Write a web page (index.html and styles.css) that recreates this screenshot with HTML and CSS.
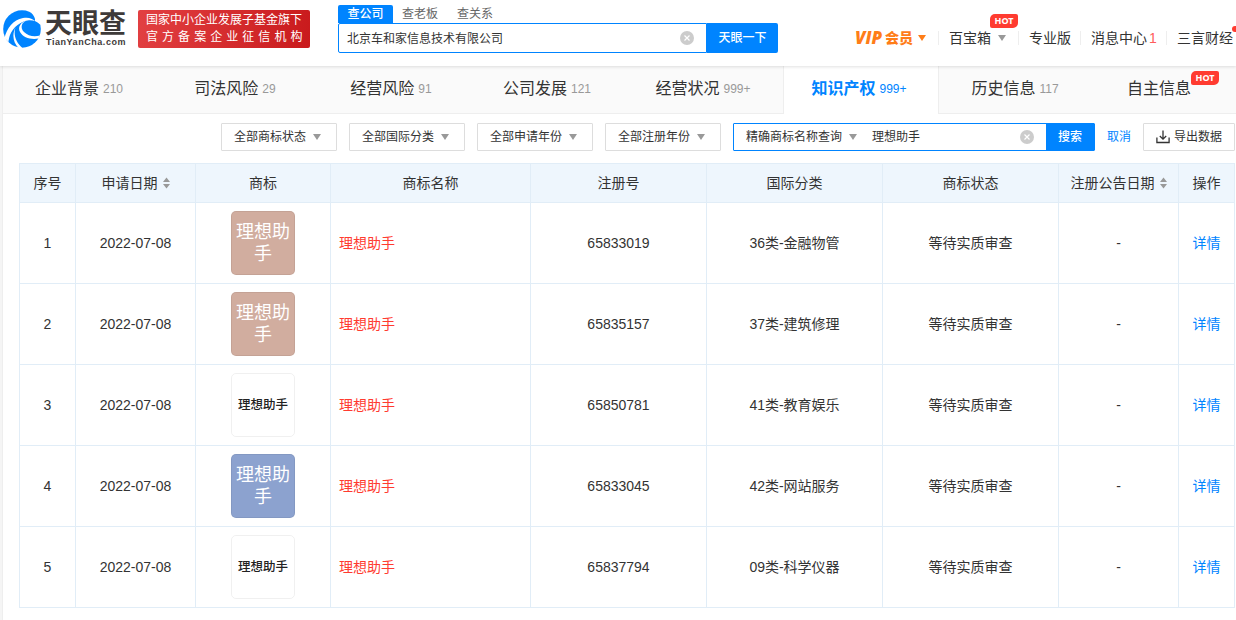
FILE: index.html
```html
<!DOCTYPE html>
<html lang="zh-CN">
<head>
<meta charset="utf-8">
<title>天眼查</title>
<link rel="stylesheet" href="styles.css">
</head>
<body>
<header class="header">
  <div class="logo">
    <svg class="logo-mark" width="38" height="38" viewBox="0 0 38 38">
      <circle cx="19" cy="19" r="18.8" fill="#0084ff"/>
      <path d="M1.500 28C4 18 10 10 20 8C26 7 29 8.500 32 11C32.500 8.500 31 5.500 28 2.500L32 3L38 11L37.500 15C34 11 30 10 26 10.200C18 11 10 17 7 25C6 28 5.500 30 5.500 32Z" fill="#fff"/>
      <path d="M12.500 17C10 25 13 33 20 38.500H16C10.500 33 8.500 26 12.500 17Z" fill="#fff"/>
      <path d="M25 10C18 12 17 18 21 22C25 26 31 27 37 25.500L35.500 28.500C28 30 20 27.500 17 22C14.500 17 17.500 12 25 10Z" fill="#fff"/>
    </svg>
    <div class="logo-words">
      <div class="logo-cn">天眼查</div>
      <div class="logo-en">TianYanCha.com</div>
    </div>
  </div>
  <div class="slogan"><div class="slogan-top">国家中小企业发展子基金旗下</div><div class="slogan-bottom">官方备案企业征信机构</div></div>
  <div class="search">
    <div class="search-tabs"><span class="search-tab search-tab-on">查公司</span><span class="search-tab">查老板</span><span class="search-tab">查关系</span></div>
    <div class="search-box">
      <div class="search-input"><span>北京车和家信息技术有限公司</span>
        <svg width="14" height="14" viewBox="0 0 14 14"><circle cx="7" cy="7" r="7" fill="#ccc"/><path d="M4.500 4.500l5 5M9.500 4.500l-5 5" stroke="#fff" stroke-width="1.200"/></svg>
      </div>
      <div class="search-btn">天眼一下</div>
    </div>
  </div>
  <nav class="nav">
    <div class="nav-item vip"><i>VIP</i><b>会员</b><span class="caret caret-orange"></span></div>
    <div class="nav-item box">百宝箱<span class="caret"></span><span class="hot hot-nav">HOT</span></div>
    <div class="nav-item pro">专业版</div>
    <div class="nav-item msg">消息中心<span class="count">1</span></div>
    <div class="nav-item user">三言财经<span class="dot"></span></div>
  </nav>
</header>
<main class="panel">
  <div class="tabs">
    <div class="tab">企业背景<span>210</span></div>
    <div class="tab">司法风险<span>29</span></div>
    <div class="tab">经营风险<span>91</span></div>
    <div class="tab">公司发展<span>121</span></div>
    <div class="tab">经营状况<span>999+</span></div>
    <div class="tab tab-on">知识产权<span>999+</span></div>
    <div class="tab">历史信息<span>117</span></div>
    <div class="tab tab-last">自主信息<em class="hot hot-tab">HOT</em></div>
  </div>
  <div class="filters">
    <div class="select">全部商标状态<span class="caret"></span></div>
    <div class="select">全部国际分类<span class="caret"></span></div>
    <div class="select">全部申请年份<span class="caret"></span></div>
    <div class="select">全部注册年份<span class="caret"></span></div>
    <div class="query">
      <div class="query-type">精确商标名称查询<span class="caret"></span></div>
      <div class="query-text">理想助手</div>
      <svg width="14" height="14" viewBox="0 0 14 14"><circle cx="7" cy="7" r="7" fill="#ccc"/><path d="M4.500 4.500l5 5M9.500 4.500l-5 5" stroke="#fff" stroke-width="1.200"/></svg>
      <div class="query-btn">搜索</div>
    </div>
    <div class="cancel">取消</div>
    <div class="export">
      <svg width="14" height="14" viewBox="0 0 14 14" fill="none" stroke="#333" stroke-width="1.300"><path d="M7 .5v8.500M3.800 6L7 9.200L10.200 6M.9 7.500v5h12.200v-5"/></svg>导出数据
    </div>
  </div>
  <div class="table">
    <div class="row head">
      <div>序号</div>
      <div>申请日期<svg class="sort" width="7" height="12" viewBox="0 0 7 12"><path d="M0 5L3.500 .5L7 5ZM0 7H7L3.500 11.500Z" fill="#999"/></svg></div>
      <div>商标</div><div>商标名称</div><div>注册号</div><div>国际分类</div><div>商标状态</div>
      <div>注册公告日期<svg class="sort" width="7" height="12" viewBox="0 0 7 12"><path d="M0 5L3.500 .5L7 5ZM0 7H7L3.500 11.500Z" fill="#999"/></svg></div>
      <div>操作</div>
    </div>
    <div class="row"><div>1</div><div>2022-07-08</div><div><span class="mark brown">理想助手</span></div><div class="name">理想助手</div><div>65833019</div><div>36类-金融物管</div><div>等待实质审查</div><div>-</div><div class="link">详情</div></div>
    <div class="row"><div>2</div><div>2022-07-08</div><div><span class="mark brown">理想助手</span></div><div class="name">理想助手</div><div>65835157</div><div>37类-建筑修理</div><div>等待实质审查</div><div>-</div><div class="link">详情</div></div>
    <div class="row"><div>3</div><div>2022-07-08</div><div><span class="mark plain">理想助手</span></div><div class="name">理想助手</div><div>65850781</div><div>41类-教育娱乐</div><div>等待实质审查</div><div>-</div><div class="link">详情</div></div>
    <div class="row"><div>4</div><div>2022-07-08</div><div><span class="mark blue">理想助手</span></div><div class="name">理想助手</div><div>65833045</div><div>42类-网站服务</div><div>等待实质审查</div><div>-</div><div class="link">详情</div></div>
    <div class="row"><div>5</div><div>2022-07-08</div><div><span class="mark plain">理想助手</span></div><div class="name">理想助手</div><div>65837794</div><div>09类-科学仪器</div><div>等待实质审查</div><div>-</div><div class="link">详情</div></div>
  </div>
</main>
</body>
</html>
```
FILE: styles.css
```css
* { box-sizing: border-box; }
body {
  margin: 0;
  width: 1236px;
  height: 620px;
  overflow: hidden;
  background: #f5f5f5;
  color: #333;
  font: 14px/20px "Liberation Sans", "Noto Sans CJK SC", sans-serif;
  white-space: nowrap;
}
.header {
  position: relative;
  z-index: 1;
  display: flex;
  align-items: flex-start;
  height: 66px;
  padding-left: 3px;
  background: #fff;
  box-shadow: 0 1px 3px rgba(0, 0, 0, .12);
}
.logo { display: flex; width: 135px; padding-top: 10px; }
.logo-mark { flex: none; margin-right: 4px; }
.logo-cn { height: 27px; color: #3e3a39; font-size: 27px; line-height: 29px; font-weight: 700; }
.logo-en { padding-left: 1px; color: #3e3a39; font-size: 9px; line-height: 10px; font-weight: 700; letter-spacing: .55px; }
.slogan {
  width: 172px;
  height: 38px;
  margin-top: 10px;
  padding: 2px 8px 0;
  border-radius: 2px;
  background: linear-gradient(100deg, #e24042, #c91a1c);
  color: #fff;
  font-size: 12px;
  line-height: 17px;
}
.slogan-bottom { letter-spacing: 4.050px; }
.search { width: 440px; margin: 5px 0 0 28px; }
.search-tabs { display: flex; height: 18px; gap: 19px; font-size: 12px; line-height: 18px; color: #666; }
.search-tab-on { width: 55px; margin-right: -10px; border-radius: 2px 2px 0 0; background: #0084ff; color: #fff; font-weight: 500; text-align: center; }
.search-box { display: flex; height: 30px; }
.search-input {
  display: flex;
  align-items: center;
  justify-content: space-between;
  width: 369px;
  padding: 0 12px 0 8px;
  border: 1px solid #0084ff;
  border-radius: 2px 0 0 2px;
  font-size: 12px;
}
.search-input span { padding-top: 1px; }
.search-btn { width: 71px; border-radius: 0 2px 2px 0; background: #0084ff; color: #fff; font-size: 12px; line-height: 30px; font-weight: 500; text-align: center; }
.nav { display: flex; margin: 31px 0 0 77px; line-height: 14px; }
.nav-item { position: relative; display: flex; align-items: center; height: 14px; }
.nav-item + .nav-item { border-left: 1px solid #eee; }
.vip { width: 83px; color: #ff7d18; }
.vip i { width: 30px; font-family: "Open Sans", sans-serif; font-size: 17px; font-weight: 800; letter-spacing: 0; }
.vip b { font-weight: 900; }
.caret { width: 0; height: 0; margin-left: 7px; border: 4.500px solid transparent; border-top: 6px solid #999; border-bottom: 0; }
.caret-orange { margin-left: 5px; border-top-color: #ff7d18; }
.box { width: 80px; padding-left: 10px; }
.pro { width: 62px; padding-left: 10px; }
.msg { width: 86px; padding-left: 10px; }
.count { margin-left: 2px; color: #ff5c5c; }
.user { padding-left: 10px; }
.dot { position: absolute; right: -5px; top: -5px; width: 6px; height: 6px; border-radius: 50%; background: #ff3b30; }
.hot { width: 28px; height: 14px; border-radius: 5px 2px 5px 2px; background: #ff3b30; color: #fff; font: 700 9px/14px "Noto Sans", sans-serif; text-align: center; }
.hot-nav { position: absolute; left: 51px; top: -17px; }
.hot-tab { margin-top: -22px; }
.panel { height: 554px; margin-left: 2px; border-left: 1px solid #eee; background: #fff; }
.tabs { display: flex; width: 1248px; height: 48px; border-bottom: 1px solid #eee; background: #fafafa; }
.tab { display: flex; align-items: center; justify-content: center; width: 156px; height: 47px; padding: 0 4px 1px 0; font-size: 16px; }
.tab span { margin-left: 4px; color: #999; font-size: 12px; }
.tab-on { height: 48px; padding-bottom: 2px; border: solid #eee; border-width: 0 1px; background: #fff; color: #0084ff; font-weight: 700; }
.tab-on span { color: #0084ff; font-weight: 400; }
.tab-last { padding-right: 0; }
.filters { display: flex; gap: 12px; height: 49px; padding: 9px 0 0 218px; font-size: 12px; line-height: 26px; }
.select { display: flex; align-items: center; width: 116px; height: 28px; padding-left: 12px; border: 1px solid #ddd; border-radius: 1px; }
.query { display: flex; align-items: center; width: 362px; height: 28px; border: 1px solid #0084ff; border-radius: 1px; }
.query-type { display: flex; align-items: center; width: 138px; padding-left: 12px; }
.query-text { width: 148px; }
.query-btn { width: 48px; height: 26px; margin-left: auto; background: #0084ff; color: #fff; font-weight: 500; text-align: center; }
.cancel { width: 24px; line-height: 28px; color: #0084ff; }
.export { display: flex; align-items: center; width: 92px; height: 28px; padding-left: 12px; border: 1px solid #ddd; border-radius: 1px; }
.export svg { margin-right: 4px; }
.table { width: 1216px; margin-left: 16px; border: solid #e1edf7; border-width: 1px 0 0 1px; }
.row { display: grid; grid-template-columns: 56px 120px 135px 200px 176px 176px 176px 120px 56px; height: 81px; }
.row > div { display: flex; align-items: center; justify-content: center; border: solid #e1edf7; border-width: 0 1px 1px 0; }
.head { height: 39px; background: #eef6fd; }
.sort { margin-left: 5px; }
.row > .name { justify-content: flex-start; padding-left: 8px; color: #ff3b30; }
.row > .link { color: #0084ff; }
.mark { width: 64px; height: 64px; border: 1px solid rgba(0, 0, 0, .06); border-radius: 5px; color: #fff; font-size: 18px; line-height: 22px; padding: 9px 4px; text-align: center; white-space: normal; word-break: break-all; }
.brown { background: #d1ad9f; }
.blue { background: #8ca2cf; }
.plain { padding: 0; color: #222; font-size: 12.500px; line-height: 62px; font-weight: 500; white-space: nowrap; }
```
